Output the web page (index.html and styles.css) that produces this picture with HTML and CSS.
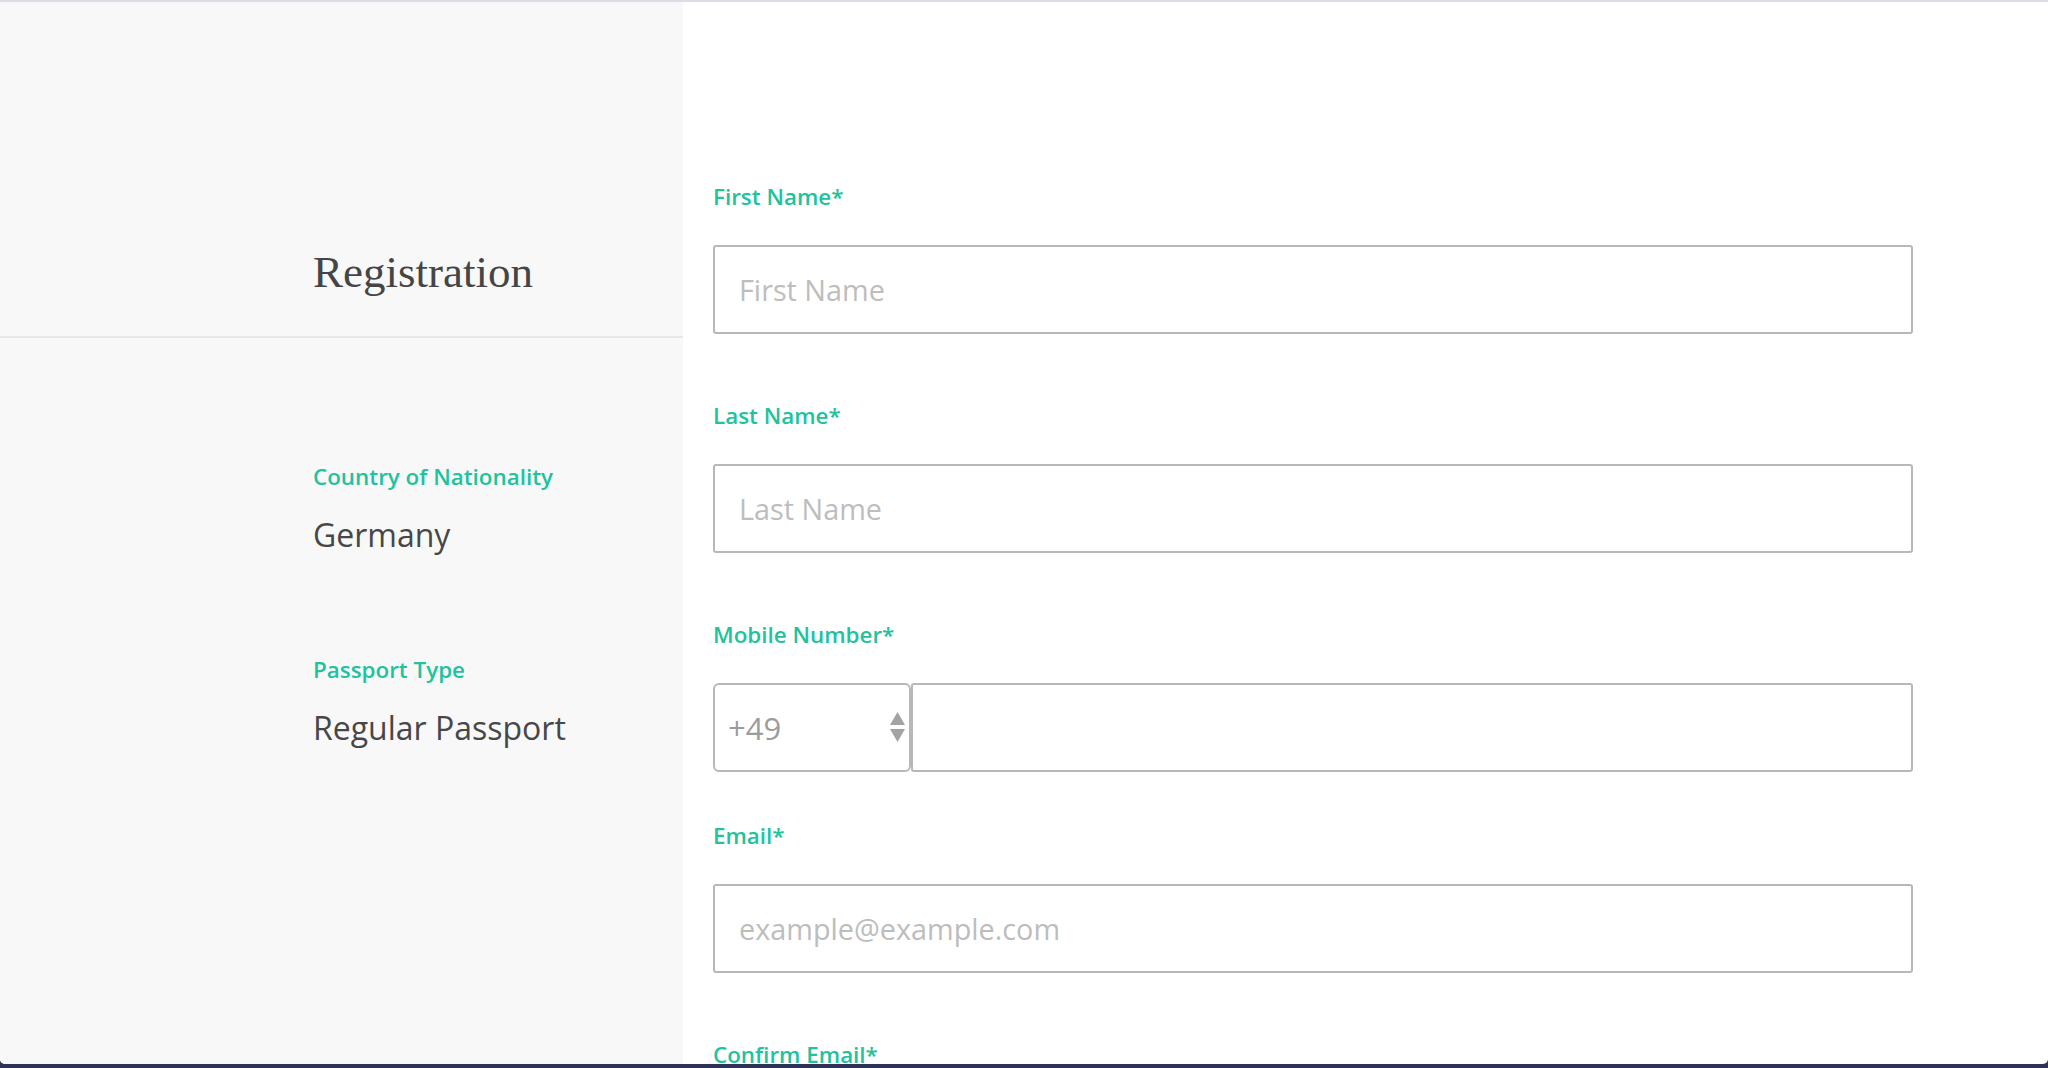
FILE: index.html
```html
<!DOCTYPE html>
<html lang="en">
<head>
    <meta charset="UTF-8">
    <title>Registration</title>
    <link rel="stylesheet" href="styles.css">
</head>
<body>
    <div class="sheet">
        <aside class="summary">
            <div class="summary-head">
                <h1>Registration</h1>
            </div>
            <div class="summary-body">
                <div class="fact">
                    <div class="fact-label">Country of Nationality</div>
                    <div class="fact-value">Germany</div>
                </div>
                <div class="fact">
                    <div class="fact-label">Passport Type</div>
                    <div class="fact-value">Regular Passport</div>
                </div>
            </div>
        </aside>

        <main class="form">
            <div class="field">
                <label class="field-label" for="firstName">First Name*</label>
                <input class="text-input" id="firstName" type="text" placeholder="First Name">
            </div>
            <div class="field">
                <label class="field-label" for="lastName">Last Name*</label>
                <input class="text-input" id="lastName" type="text" placeholder="Last Name">
            </div>
            <div class="field field-phone">
                <label class="field-label" for="phone">Mobile Number*</label>
                <div class="phone-row">
                    <div class="code-select">
                        <select id="dialCode">
                            <option>+49</option>
                            <option>+43</option>
                            <option>+41</option>
                        </select>
                        <svg class="code-arrows" width="15" height="30" viewBox="0 0 15 30">
                            <polygon points="7.5,0 15,13 0,13" fill="#a3a3a3"/>
                            <polygon points="0,17 15,17 7.5,30" fill="#a3a3a3"/>
                        </svg>
                    </div>
                    <input class="text-input phone-input" id="phone" type="tel">
                </div>
            </div>
            <div class="field">
                <label class="field-label" for="email">Email*</label>
                <input class="text-input" id="email" type="email" placeholder="example@example.com">
            </div>
            <div class="field">
                <label class="field-label" for="emailConfirm">Confirm Email*</label>
                <input class="text-input" id="emailConfirm" type="email" placeholder="example@example.com">
            </div>
        </main>
    </div>
</body>
</html>
```

FILE: styles.css
```css
html, body {
    margin: 0;
    height: 100%;
}

body {
    font-family: "Open Sans", "Liberation Sans", sans-serif;
    background: #2e3258;
    overflow: hidden;
}

.sheet {
    box-sizing: border-box;
    height: 1064px;
    display: flex;
    background: #fff;
    border-top: 2px solid #dcdce4;
    border-radius: 0 0 5px 5px;
    overflow: hidden;
}

.summary {
    width: 683px;
    flex-shrink: 0;
    background: #f8f8f8;
}

.summary-head {
    box-sizing: border-box;
    height: 336px;
    padding: 248px 0 0 313px;
    border-bottom: 2px solid #e8e8e8;
}

.summary-head h1 {
    margin: 0;
    font-family: "Liberation Serif", serif;
    font-weight: normal;
    font-size: 45px;
    line-height: 44px;
    color: #454545;
}

.summary-body {
    padding: 124px 0 0 313px;
}

.fact {
    margin-bottom: 99px;
}

.fact-label {
    font-size: 22.4px;
    font-weight: 600;
    line-height: 30px;
    color: #22c29d;
    margin-bottom: 22px;
}

.fact-value {
    font-size: 32px;
    line-height: 42px;
    color: #474747;
}

.form {
    width: 1200px;
    padding: 180px 0 0 30px;
}

.field {
    margin-bottom: 67px;
}

.field-phone {
    margin-bottom: 49px;
}

.field-label {
    display: block;
    font-size: 22.4px;
    font-weight: 600;
    line-height: 30px;
    color: #22c29d;
    margin-bottom: 33px;
}

.text-input {
    box-sizing: border-box;
    display: block;
    width: 100%;
    height: 89px;
    padding: 0 24px;
    border: 2px solid #b8b8b8;
    border-radius: 3px;
    background: #fff;
    font-family: inherit;
    font-size: 28.8px;
    color: #444;
    outline: none;
}

.text-input::placeholder {
    color: #bdbdbd;
}

.phone-row {
    display: flex;
}

.code-select {
    position: relative;
    width: 198px;
    flex-shrink: 0;
}

.code-select select {
    box-sizing: border-box;
    width: 100%;
    height: 89px;
    padding: 0 0 0 13px;
    border: 2px solid #b8b8b8;
    border-radius: 6px;
    background: #fff;
    font-family: inherit;
    font-size: 31px;
    color: #9c9c9c;
    appearance: none;
    -webkit-appearance: none;
    outline: none;
}

.code-arrows {
    position: absolute;
    top: 29px;
    right: 6px;
    pointer-events: none;
}

.phone-input {
    flex: 1;
    width: auto;
}
```
